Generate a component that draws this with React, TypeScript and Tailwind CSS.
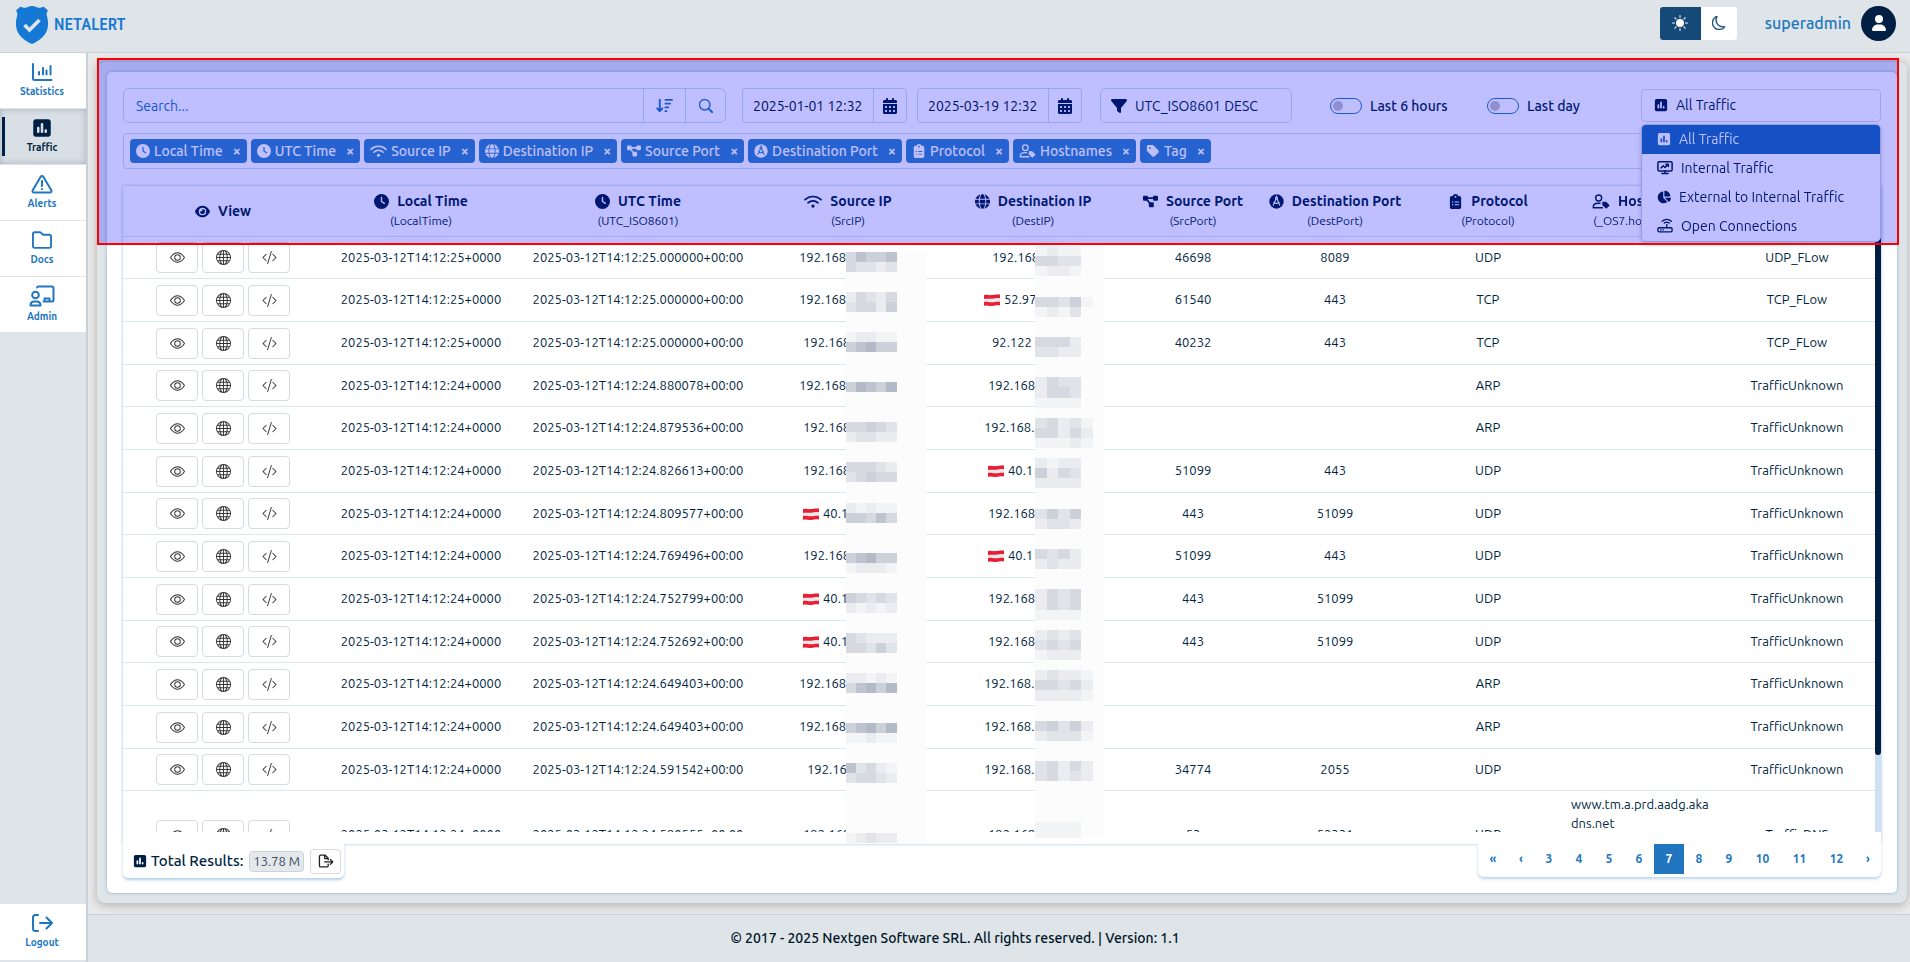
import React from "react";
import {
  FaArrowDownWideShort, FaCalendarDays, FaChartPie, FaClipboardList, FaClock, FaDiagramProject,
  FaEye, FaFilter, FaGlobe, FaRegFolder, FaSquarePollVertical, FaTag, FaUser,
} from "react-icons/fa6";
import { BsCodeSlash, BsEye, BsGlobe, BsMoon, BsSearch, BsSunFill } from "react-icons/bs";

type IconProps = { className?: string };
type Icon = React.ComponentType<IconProps>;

const stroke = {
  fill: "none",
  stroke: "currentColor",
  strokeWidth: 2,
  strokeLinecap: "round" as const,
  strokeLinejoin: "round" as const,
  "aria-hidden": true,
};

const ChartIcon: Icon = ({ className }) => (
  <svg viewBox="0 0 22 20" className={className} {...stroke}>
    <path d="M2 2v14.5a1.5 1.5 0 0 0 1.5 1.5H20.5M8 12.500v-2.500M12 12.500v-6.500M15.500 12.500V8.500M19.500 12.500V4" />
  </svg>
);
const AlertIcon: Icon = ({ className }) => (
  <svg viewBox="0 0 22 20" className={className} {...stroke}>
    <path d="M9.700 2.700 1.700 16.200A1.500 1.500 0 0 0 3 18.500h16a1.500 1.500 0 0 0 1.300-2.300L12.300 2.700a1.500 1.500 0 0 0-2.600 0ZM11 7v5M11 15v.3" />
  </svg>
);
const AdminIcon: Icon = ({ className }) => (
  <svg viewBox="0 0 26 22" className={className} {...stroke}>
    <circle cx="6.500" cy="10" r="3.300" />
    <path d="M1.500 20.500c0-2.600 1.800-4 4-4h2c2.200 0 4 1.400 4 4ZM8 2.500A1.500 1.500 0 0 1 9.500 1.500h13.500A1.500 1.500 0 0 1 24.500 3v12a1.500 1.500 0 0 1-1.500 1.500H14.500M15.500 16v-2.500h5V16" />
  </svg>
);
const LogoutIcon: Icon = ({ className }) => (
  <svg viewBox="0 0 22 20" className={className} {...stroke}>
    <path d="M7 2H4.500A2.500 2.500 0 0 0 2 4.500v11A2.500 2.500 0 0 0 4.500 18H7M9 10h12M15.500 4.500 21 10l-5.500 5.500" />
  </svg>
);
const ExportIcon: Icon = ({ className }) => (
  <svg viewBox="0 0 18 16" className={className} {...stroke} strokeWidth={1.5}>
    <path d="M11.500 11.500v1.800A1.500 1.500 0 0 1 10 14.800H3a1.500 1.500 0 0 1-1.500-1.500V2.700A1.500 1.500 0 0 1 3 1.200h4.800l3.700 3.700v1.600M7.500 1.500v3.700h3.700M7.500 9h9M14 6.200 16.800 9 14 11.800" />
  </svg>
);
const WifiIcon: Icon = ({ className }) => (
  <svg viewBox="0 0 18 14" className={className} {...stroke} strokeWidth={1.7}>
    <path d="M1 5.200c4.600-4.300 11.400-4.300 16 0M4 8.300c2.900-2.600 7.100-2.600 10 0" />
    <circle cx="9" cy="11.600" r="1.600" fill="currentColor" stroke="none" />
  </svg>
);
const MonitorIcon: Icon = ({ className }) => (
  <svg viewBox="0 0 18 16" className={className} {...stroke} strokeWidth={1.7}>
    <rect x="1" y="1.500" width="16" height="10.500" rx="1.500" />
    <path d="M5.500 14.800h7M9 12v2.500M4.500 8.500 7 6l2 2 3.500-3.500M10 4.300h2.800v2.600" />
  </svg>
);
const RouterIcon: Icon = ({ className }) => (
  <svg viewBox="0 0 18 16" className={className} {...stroke} strokeWidth={1.5}>
    <rect x="1" y="10.500" width="16" height="4.700" rx="1.300" />
    <path d="M4 12.900h.6M6.600 12.900h.6M11 10.300V6.800M5.800 3.200c3-2.700 7.400-2.700 10.400 0M8.200 5.300c1.700-1.400 3.900-1.400 5.600 0" />
  </svg>
);
const CompassIcon: Icon = ({ className }) => {
  const id = React.useId();
  return (
    <svg viewBox="0 0 16 16" className={className} aria-hidden>
      <mask id={id}>
        <rect width="16" height="16" fill="#fff" />
        <g fill="none" stroke="#000" strokeWidth="1.200" strokeLinecap="round">
          <circle cx="8" cy="4.300" r="1.100" />
          <path d="M7.300 5.500 4.500 12M8.700 5.500l2.800 6.500M5.200 9c1.700 1.200 3.900 1.200 5.600 0M8 2v1" />
        </g>
      </mask>
      <circle cx="8" cy="8" r="7.700" fill="currentColor" mask={`url(#${id})`} />
    </svg>
  );
};
const HostIcon: Icon = ({ className }) => (
  <svg viewBox="0 0 19 16" className={className} {...stroke} strokeWidth={1.5}>
    <circle cx="7" cy="4.300" r="3.200" />
    <path d="M11 14.600H1.200c0-3.200 2-4.700 4.500-4.700h2.800" />
    <path d="M11.500 8.800h3l3.500 3.300-2.800 2.800-3.700-3.300Z" fill="currentColor" strokeWidth={1.200} />
  </svg>
);
const ShieldLogo: Icon = ({ className }) => (
  <svg viewBox="0 0 32 38" className={className} aria-hidden>
    <path
      fill="#1478d4"
      d="M4.500.5c2.500 1.800 5 1.600 7.200.4C13 .2 14.500 0 16 0s3 .2 4.300.9c2.200 1.200 4.700 1.400 7.200-.4L32 4.500c-1.800 2.500-1.500 4.500-.7 7 .8 2.600.9 6.500.5 9.500C30.800 29.500 23 35 16 38 9 35 1.200 29.500.2 21c-.4-3-.3-6.900.5-9.500.8-2.500 1.100-4.500-.7-7Z"
    />
    <path d="m8.500 19 5 5L23.500 14" fill="none" stroke="#dee4e7" strokeWidth="3.600" />
  </svg>
);
const Flag = () => (
  <svg viewBox="0 0 16 12" className="mr-1 inline-block h-3 w-4 align-[-2px]" role="img" aria-label="Austria">
    <path d="M0 1.200C3 0 5 1.600 8 1.100S13 .2 16 .6v10.200c-3-.6-5 .4-8 .7s-5-.7-8 .2Z" fill="#e8e8ec" />
    <path d="M0 1.200C3 0 5 1.600 8 1.100S13 .2 16 .6v3.600c-3-.4-5 .4-8 .6S3 4.200 0 5Z" fill="#e81e32" />
    <path d="M0 8c3-.9 5 .6 8 .3s5-1 8-.5v3.600c-3-.6-5 .2-8 .5s-5-.9-8 0Z" fill="#e81e32" />
  </svg>
);

const nav: { label: string; icon: Icon; active?: boolean; size: string }[] = [
  { label: "Statistics", icon: ChartIcon, size: "h-5 w-[22px]" },
  { label: "Traffic", icon: FaSquarePollVertical, active: true, size: "size-5" },
  { label: "Alerts", icon: AlertIcon, size: "h-5 w-[22px]" },
  { label: "Docs", icon: FaRegFolder, size: "size-5" },
  { label: "Admin", icon: AdminIcon, size: "h-[22px] w-[26px]" },
];

const columns: { label: string; field?: string; icon: Icon; width: string; wide?: boolean }[] = [
  { label: "View", icon: FaEye, width: "w-[200px]" },
  { label: "Local Time", field: "(LocalTime)", icon: FaClock, width: "w-[196px]" },
  { label: "UTC Time", field: "(UTC_ISO8601)", icon: FaClock, width: "w-[238px]" },
  { label: "Source IP", field: "(SrcIP)", icon: WifiIcon, width: "w-[182px]", wide: true },
  { label: "Destination IP", field: "(DestIP)", icon: FaGlobe, width: "w-[188px]" },
  { label: "Source Port", field: "(SrcPort)", icon: FaDiagramProject, width: "w-[132px]" },
  { label: "Destination Port", field: "(DestPort)", icon: CompassIcon, width: "w-[152px]" },
  { label: "Protocol", field: "(Protocol)", icon: FaClipboardList, width: "w-[154px]" },
  { label: "Hostnames", field: "(_OS7.hostnames)", icon: HostIcon, width: "w-[154px]", wide: true },
  { label: "Tag", field: "(Tag)", icon: FaTag, width: "w-[156px]" },
];

type Ip = { text: string; flag?: boolean; width: string };
const wide = "w-[98px]";
const mid = "w-[90px]";
const slim = "w-[82px]";
const ip = (text: string, width: string, flag = false): Ip => ({ text, width, flag });

type Row = { local: string; utc: string; src: Ip; dst: Ip; sp: string; dp: string; proto: string; host?: string; tag: string };
const row = (s: string, frac: string, src: Ip, dst: Ip, sp: string, dp: string, proto: string, tag: string, host = ""): Row => ({
  local: `2025-03-12T14:12:${s}+0000`,
  utc: `2025-03-12T14:12:${s}.${frac}+00:00`,
  src, dst, sp, dp, proto, tag, host,
});
const rows: Row[] = [
  row("25", "000000", ip("192.168", wide), ip("192.168", slim), "46698", "8089", "UDP", "UDP_FLow"),
  row("25", "000000", ip("192.168", wide), ip("52.97", wide, true), "61540", "443", "TCP", "TCP_FLow"),
  row("25", "000000", ip("192.168", mid), ip("92.122", slim), "40232", "443", "TCP", "TCP_FLow"),
  row("24", "880078", ip("192.168", wide), ip("192.168", mid), "", "", "ARP", "TrafficUnknown"),
  row("24", "879536", ip("192.168", mid), ip("192.168.", wide), "", "", "ARP", "TrafficUnknown"),
  row("24", "826613", ip("192.168", mid), ip("40.1", mid, true), "51099", "443", "UDP", "TrafficUnknown"),
  row("24", "809577", ip("40.1", mid, true), ip("192.168", mid), "443", "51099", "UDP", "TrafficUnknown"),
  row("24", "769496", ip("192.168", mid), ip("40.1", mid, true), "51099", "443", "UDP", "TrafficUnknown"),
  row("24", "752799", ip("40.1", mid, true), ip("192.168", mid), "443", "51099", "UDP", "TrafficUnknown"),
  row("24", "752692", ip("40.1", mid, true), ip("192.168", mid), "443", "51099", "UDP", "TrafficUnknown"),
  row("24", "649403", ip("192.168", wide), ip("192.168.", wide), "", "", "ARP", "TrafficUnknown"),
  row("24", "649403", ip("192.168", wide), ip("192.168.", wide), "", "", "ARP", "TrafficUnknown"),
  row("24", "591542", ip("192.16", slim), ip("192.168.", wide), "34774", "2055", "UDP", "TrafficUnknown"),
  row("24", "590555", ip("192.168", mid), ip("192.168", mid), "53", "52331", "UDP", "TrafficDNS", "www.tm.a.prd.aadg.akadns.net"),
];

const shades: Record<string, string> = {
  a: "#f3f4f6", b: "#eaecef", c: "#e0e3e7", d: "#d6dae0", e: "#cbd0d9", f: "#bec4cf", g: "#b2bac8",
};
const srcCells: Record<number, string> = {
  0: "dfeef", 1: "dccbc", 4: "bdcbd", 5: "cddbe", 8: "abbaa", 9: "efgee", 13: "egfeg", 17: "ddedc", 18: "bccbb",
  21: "dddcb", 22: "cdedd", 25: "babaa", 26: "eedfd", 30: "efgee", 31: "abbba", 34: "edcdc", 35: "babab",
  38: "dcbbb", 39: "ddcec", 42: "bbaba", 43: "dfgeg", 47: "efgeg", 48: "aabaa", 51: "fcdba", 52: "cddcb", 58: "abcbb",
};
const dstCells: Record<number, string> = {
  0: "abaa", 1: "ddcc", 2: "abba", 5: "ddcea", 6: "abac", 9: "dddb", 10: "ccbb", 13: "bdcc", 14: "bddc", 15: "aaaa",
  17: "cdbca", 18: "ddbdb", 19: "aaaba", 21: "babb", 22: "ebdc", 23: "bbbb", 26: "cece", 27: "bccb", 30: "dcdb",
  31: "bcbb", 34: "bdcd", 35: "bdcd", 36: "aaaa", 38: "bcbc", 39: "cdcd", 40: "abbb", 42: "bcbba", 43: "ddcdb",
  44: "bbbba", 47: "deceb", 48: "bccca", 51: "cdbdb", 52: "cdbcb", 57: "aaaa", 58: "aaaa",
};

type MosaicProps = { cells: Record<number, string>; cellW: number; cellH: number; width: number; className: string };
function Mosaic({ cells, cellW, cellH, width, className }: MosaicProps) {
  return (
    <svg viewBox={`0 0 ${width} 592`} width={width} height={592} className={className} shapeRendering="crispEdges" aria-hidden>
      <rect width={width} height={592} fill="#fcfcfd" />
      {Object.entries(cells).flatMap(([line, text]) =>
        [...text].map((c, i) => (
          <rect key={`${line}-${i}`} x={i * cellW} y={Number(line) * cellH} width={cellW} height={cellH} fill={shades[c]} />
        )),
      )}
    </svg>
  );
}

const IpText = ({ value }: { value: Ip }) => (
  <span className={`inline-block text-left ${value.width}`}>
    {value.flag && <Flag />}
    {value.text}
  </span>
);

const rowActions: { label: string; icon: Icon }[] = [
  { label: "View", icon: BsEye },
  { label: "Lookup", icon: BsGlobe },
  { label: "Source", icon: BsCodeSlash },
];

const options: { label: string; icon: Icon; size: string; selected?: boolean }[] = [
  { label: "All Traffic", icon: FaSquarePollVertical, size: "size-[14px]", selected: true },
  { label: "Internal Traffic", icon: MonitorIcon, size: "h-[15px] w-4" },
  { label: "External to Internal Traffic", icon: FaChartPie, size: "size-[14px]" },
  { label: "Open Connections", icon: RouterIcon, size: "h-[15px] w-4" },
];

function DateField({ id, value, label }: { id: string; value: string; label: string }) {
  return (
    <div className="flex h-[35px] w-[165px] shrink-0 rounded-[4px] border border-[#c9dcee]">
      <input id={id} aria-label={label} defaultValue={value} className="min-w-0 flex-1 px-[10px] text-sm text-[#001529] outline-none" />
      <button type="button" aria-label={`Pick ${label}`} className="flex w-[33px] items-center justify-center border-l border-[#c9dcee]">
        <FaCalendarDays className="size-4" />
      </button>
    </div>
  );
}

function Toggle({ id, label }: { id: string; label: string }) {
  return (
    <div className="flex shrink-0 items-center gap-2">
      <input
        id={id}
        type="checkbox"
        role="switch"
        className="h-4 w-8 appearance-none rounded-full border border-[#2176bf] before:ml-[2px] before:mt-[2px] before:block before:size-[10px] before:rounded-full before:bg-[#bfbfbf] checked:before:ml-[18px]"
      />
      <label htmlFor={id} className="text-sm font-medium whitespace-nowrap">{label}</label>
    </div>
  );
}

function TrafficSelect() {
  return (
    <div className="relative w-60 shrink-0">
      <button type="button" aria-haspopup="listbox" aria-expanded="true" className="flex h-[33px] w-full items-center gap-2 rounded-[4px] border border-[#d5dae3] px-3 pb-[2px] text-sm">
        <FaSquarePollVertical className="size-[14px]" />
        All Traffic
      </button>
      <ul role="listbox" aria-label="Traffic type" className="absolute inset-x-0 top-[35px] z-20 overflow-hidden rounded-[5px] border border-[#c8cfd9] bg-white text-sm shadow-[0_2px_5px_rgba(0,31,66,0.2)]">
        {options.map(({ label, icon: I, size, selected }) => (
          <li
            key={label}
            role="option"
            aria-selected={!!selected}
            className={`flex h-[29px] items-center gap-2 px-[15px] pb-[2px] ${selected ? "bg-[#1c6bb0] text-white" : ""}`}
          >
            <I className={size} />
            {label}
          </li>
        ))}
      </ul>
    </div>
  );
}

const cellBorder = "border-b border-[#d9e6f1]";

const rowHeight = (i: number) => (i === rows.length - 1 ? "h-[89px]" : i % 3 === 0 ? "h-[42px]" : "h-[43px]");

export default function App() {
  return (
    <div className="flex h-screen flex-col overflow-hidden bg-[#dee4e7] font-['Ubuntu','Noto_Sans',sans-serif] text-[#001f42]">
      <header className="flex h-[53px] shrink-0 items-center border-b border-[#c8d1d9] pr-[14px] pl-4 pb-[6px]">
        <a href="#home" className="mt-1 flex items-center gap-[6px]">
          <ShieldLogo className="h-[38px] w-8" />
          <span className="font-['Roboto_Condensed','Open_Sans_Condensed','Noto_Sans_Condensed','Roboto',sans-serif] text-[17px] font-medium text-[#1478d4]">NETALERT</span>
        </a>
        <div className="ml-auto flex h-[33px] overflow-hidden rounded-[3px]">
          <button type="button" aria-label="Light theme" className="flex w-[41px] items-center justify-center bg-[#154a78] text-white">
            <BsSunFill className="size-4" />
          </button>
          <button type="button" aria-label="Dark theme" className="flex w-9 items-center justify-center bg-white text-[#154a78]">
            <BsMoon className="size-[14px] stroke-current stroke-[0.6px]" />
          </button>
        </div>
        <a href="#profile" className="ml-7 flex items-center gap-[10px] text-base font-medium text-[#2176bf]">
          superadmin
          <span className="flex size-[35px] items-center justify-center rounded-full bg-[#001f42] text-white">
            <FaUser className="size-4" />
          </span>
        </a>
      </header>

      <div className="flex min-h-0 flex-1">
        <aside className="flex w-[88px] shrink-0 flex-col border-r-2 border-[#c8d1d9] pb-[2px]">
          <nav aria-label="Main">
            {nav.map(({ label, icon: I, active, size }) => (
              <a
                key={label}
                href={`#${label.toLowerCase()}`}
                className={`relative flex h-14 flex-col items-center justify-center gap-1 border-b border-[#dee4e7] pr-[2px] pb-[2px] text-[10px] leading-3 font-semibold ${
                  active
                    ? "bg-[#d8dfe5] text-[#001f42] shadow-[inset_0_0_6px_rgba(90,110,130,0.4)] before:absolute before:top-2 before:bottom-2 before:left-[2px] before:w-[3px] before:bg-[#001f42]"
                    : "bg-white text-[#2176bf]"
                }`}
              >
                <I className={size} />
                {label}
              </a>
            ))}
          </nav>
          <a href="#logout" className="mt-auto flex h-14 flex-col items-center justify-center gap-1 bg-white pr-[2px] pb-[2px] text-[10px] leading-3 font-semibold text-[#2176bf]">
            <LogoutIcon className="h-5 w-[22px]" />
            Logout
          </a>
        </aside>

        <main className="relative flex min-w-0 flex-1 flex-col bg-[#e9e9e9]">
          <div className="flex min-h-0 flex-1 flex-col pt-2 pr-[3px] pb-[11px] pl-[9px]">
            <section className="flex min-h-0 flex-1 flex-col rounded-lg border-t border-[#c8d1d9] bg-[#dee4e7] px-[10px] pt-[10px] pb-[10px] shadow-[0_2px_10px_rgba(0,0,0,0.25)]">
              <div className="flex min-h-0 flex-1 flex-col rounded-[5px] bg-white px-4 pt-4 pb-[15px] shadow-[0_0_3px_rgba(33,118,191,0.5)]">
                <form className="flex items-center" onSubmit={(e) => e.preventDefault()}>
                  <div className="mr-4 flex h-[35px] min-w-0 flex-1 rounded-[6px] border border-[#c9dcee] text-[#2176bf]">
                    <input id="search" aria-label="Search" placeholder="Search..." className="min-w-0 flex-1 px-3 text-sm outline-none placeholder:text-[#2176bf]" />
                    <button type="button" aria-label="Sort" className="flex w-[42px] items-center justify-center border-l border-[#c9dcee]">
                      <FaArrowDownWideShort className="size-[17px]" />
                    </button>
                    <button type="submit" aria-label="Search" className="flex w-10 items-center justify-center border-l border-[#c9dcee]">
                      <BsSearch className="size-[14px] stroke-current stroke-[0.6px]" />
                    </button>
                  </div>
                  <DateField id="from" label="start date" value="2025-01-01 12:32" />
                  <div className="w-[10px] shrink-0" />
                  <DateField id="to" label="end date" value="2025-03-19 12:32" />
                  <button type="button" className="mr-[38px] ml-[18px] flex h-[35px] w-48 shrink-0 items-center gap-2 rounded-[6px] border border-[#c9dcee] px-[10px] text-sm">
                    <FaFilter className="size-4" />
                    UTC_ISO8601 DESC
                  </button>
                  <div className="flex w-[311px] shrink-0">
                    <div className="w-[157px]"><Toggle id="six" label="Last 6 hours" /></div>
                    <Toggle id="day" label="Last day" />
                  </div>
                  <TrafficSelect />
                </form>

                <ul className="mt-[10px] flex h-9 shrink-0 items-center gap-1 rounded-[4px] border border-[#c9dcee] px-[6px]">
                  {columns.slice(1).map(({ label, icon: I, wide: isWide }) => (
                    <li key={label} className="flex h-6 items-center rounded-[4px] bg-[#3585c0] pr-1 pl-[6px] text-sm font-medium whitespace-nowrap text-white">
                      <I className={`mr-1 h-[14px] ${isWide ? "w-[17px]" : "w-[14px]"}`} />
                      {label}
                      <button type="button" aria-label={`Remove ${label}`} className="ml-2 w-3 text-sm leading-4 font-bold">×</button>
                    </li>
                  ))}
                </ul>

                <div className="mt-[17px] flex min-h-0 flex-1 flex-col pb-3 shadow-[0_0_3px_rgba(33,118,191,0.45)]">
                  <div className="relative flex min-h-0 flex-1">
                    <div className="min-w-0 flex-1 overflow-auto [scrollbar-width:none]">
                      <table className="w-full table-fixed border-separate border-spacing-0 text-center text-[13px]">
                        <thead className="sticky top-0 z-10 bg-white">
                          <tr className="h-[51px]">
                            {columns.map(({ label, field, icon: I, width, wide: isWide }) => (
                              <th key={label} scope="col" className={`p-0 align-middle font-normal ${width} ${cellBorder}`}>
                                <span className="flex items-center justify-center gap-2 text-sm leading-5 font-bold whitespace-nowrap">
                                  <I className={`h-[15px] shrink-0 ${isWide ? "w-[18px]" : "w-[15px]"}`} />
                                  {label}
                                </span>
                                {field && <span className="block text-xs leading-5">{field}</span>}
                              </th>
                            ))}
                          </tr>
                        </thead>
                        <tbody>
                          {rows.map((r, i) => (
                            <tr key={i} className={rowHeight(i)}>
                              <td className={`p-0 ${cellBorder}`}>
                                <div className="flex justify-center gap-1">
                                  {rowActions.map(({ label, icon: I }) => (
                                    <button key={label} type="button" aria-label={label} className="flex h-[31px] w-[42px] items-center justify-center rounded-[4px] border border-[#d5dae3] text-[#333]">
                                      <I className="size-[15px]" />
                                    </button>
                                  ))}
                                </div>
                              </td>
                              <td className={`p-0 ${cellBorder}`}>{r.local}</td>
                              <td className={`p-0 ${cellBorder}`}>{r.utc}</td>
                              <td className={`p-0 ${cellBorder}`}><IpText value={r.src} /></td>
                              <td className={`p-0 ${cellBorder}`}><IpText value={r.dst} /></td>
                              <td className={`p-0 ${cellBorder}`}>{r.sp}</td>
                              <td className={`p-0 ${cellBorder}`}>{r.dp}</td>
                              <td className={`p-0 ${cellBorder}`}>{r.proto}</td>
                              <td className={`px-[6px] py-1 text-left align-top leading-[19px] break-all ${cellBorder}`}>{r.host}</td>
                              <td className={`p-0 ${cellBorder}`}>{r.tag}</td>
                            </tr>
                          ))}
                        </tbody>
                      </table>
                    </div>
                    <div className="mt-[51px] w-[6px] shrink-0 bg-[#cfe1f1]">
                      <div className="h-[87%] rounded-b-[3px] bg-[#001f42]" />
                    </div>
                    <Mosaic cells={srcCells} cellW={10.1} cellH={10.02} width={80} className="absolute top-[66px] left-[723px]" />
                    <Mosaic cells={dstCells} cellW={11.6} cellH={10.1} width={69} className="absolute top-[60px] left-[912px]" />
                  </div>
                </div>

                <div className="flex h-[34px] shrink-0 items-start justify-between">
                  <div className="flex h-[34px] items-center rounded-b-[5px] bg-white pr-[3px] pl-[10px] shadow-[0_2px_3px_rgba(33,118,191,0.35)]">
                    <FaSquarePollVertical className="mr-1 size-[14px]" />
                    <span className="text-[15px] font-medium">Total Results:</span>
                    <span className="mx-[6px] rounded-[4px] border border-[#cbd3da] bg-[#e4e8eb] px-[3px] text-[13px] leading-[19px] text-[#3c4d66]">13.78 M</span>
                    <button type="button" aria-label="Export" className="flex h-[25px] w-[31px] items-center justify-center rounded-[4px] border border-[#d5dae3] text-[#222]">
                      <ExportIcon className="h-[14px] w-4" />
                    </button>
                  </div>
                  <nav aria-label="Pagination" className="flex h-[33px] items-start rounded-b-[6px] bg-white text-xs font-semibold text-[#2176bf] shadow-[0_2px_3px_rgba(33,118,191,0.3)]">
                    {["«", "‹", "3", "4", "5", "6", "7", "8", "9", "10", "11", "12", "›"].map((p) => (
                      <a
                        key={p}
                        href={`#page-${p}`}
                        aria-current={p === "7" ? "page" : undefined}
                        className={`flex h-[30px] items-center justify-center ${p.length > 1 ? "w-[37px]" : p === "‹" || p === "›" ? "w-[26px]" : "w-[30px]"} ${p === "7" ? "bg-[#2176bf] text-white" : ""}`}
                      >
                        {p}
                      </a>
                    ))}
                  </nav>
                </div>
              </div>
            </section>
          </div>

          <div className="pointer-events-none absolute top-[5px] right-[11px] left-[9px] z-30 h-[187px] border-2 border-[#ff0000] bg-[#0000ff]/25" />

          <footer className="flex h-12 shrink-0 items-center justify-center border-t border-[#c8d1d9] bg-[#dee4e7] pr-[88px] pb-[2px] text-sm font-medium text-[#001529]">
            © 2017 - 2025 Nextgen Software SRL. All rights reserved. | Version: 1.1
          </footer>
        </main>
      </div>
    </div>
  );
}
